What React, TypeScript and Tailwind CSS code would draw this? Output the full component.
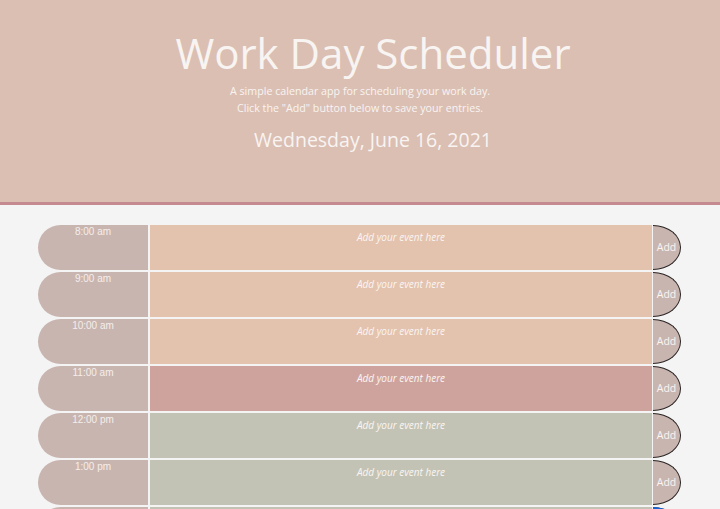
import React from "react";

type Slot = {
  label: string;
  state: "past" | "present" | "future";
};

const slots: Slot[] = [
  { label: "8:00 am", state: "past" },
  { label: "9:00 am", state: "past" },
  { label: "10:00 am", state: "past" },
  { label: "11:00 am", state: "present" },
  { label: "12:00 pm", state: "future" },
  { label: "1:00 pm", state: "future" },
  { label: "2:00 pm", state: "future" },
  { label: "3:00 pm", state: "future" },
  { label: "4:00 pm", state: "future" },
  { label: "5:00 pm", state: "future" },
];

function stateBg(state: Slot["state"]) {
  if (state === "past") return "bg-[#e3c2ae]";
  if (state === "present") return "bg-[#cea39e]";
  return "bg-[#c3c3b5]";
}

function HourRow({ slot, focused }: { slot: Slot; focused?: boolean }) {
  return (
    <div className="flex h-[45px] gap-[2px]">
      <div className="w-[110px] shrink-0 rounded-l-full bg-[#c9b5af] pt-[1px] text-center font-['Liberation_Sans',Arial,sans-serif] text-[10px] leading-[12px] text-[#f5eeec]">
        {slot.label}
      </div>
      <textarea
        className={`w-[502px] shrink-0 resize-none ${stateBg(
          slot.state
        )} pt-[5px] text-center font-['Open_Sans',sans-serif] text-[10px] italic leading-[14px] text-white outline-none placeholder:text-[#faf5f2]`}
        placeholder="Add your event here"
      />
      <button
        className={`-ml-[1px] flex w-[28px] shrink-0 items-center justify-center border border-l-0 border-[#2a2424] bg-[#c9b5af] font-['Open_Sans',sans-serif] text-[10.5px] text-[#faf6f4] rounded-tr-[100%_50%] rounded-br-[100%_50%] ${
          focused ? "outline-2 -outline-offset-2 outline-[#1560d6]" : ""
        }`}
      >
        <span className="mt-[1px]">Add</span>
      </button>
    </div>
  );
}

export default function App() {
  return (
    <div className="min-h-screen bg-[#f4f4f4] font-['Open_Sans',sans-serif]">
      <header className="flex h-[205px] flex-col items-center border-b-[3px] border-[#c48a8f] bg-[#dbbfb2] pt-[27px] text-center text-[#f8f4f2]">
        <h1 className="pl-[26px] text-[42px] font-normal leading-[52px]">
          Work Day Scheduler
        </h1>
        <p className="mt-[4px] text-[10.7px] leading-[17px]">
          A simple calendar app for scheduling your work day.
          <br />
          Click the "Add" button below to save your entries.
        </p>
        <p className="mt-[10px] pl-[26px] text-[19.5px] font-normal leading-[26px]">
          Wednesday, June 16, 2021
        </p>
      </header>
      <main className="flex flex-col gap-[2px] pl-[38px] pt-[20px]">
        {slots.map((slot, i) => (
          <HourRow key={slot.label} slot={slot} focused={i === 6} />
        ))}
      </main>
    </div>
  );
}
